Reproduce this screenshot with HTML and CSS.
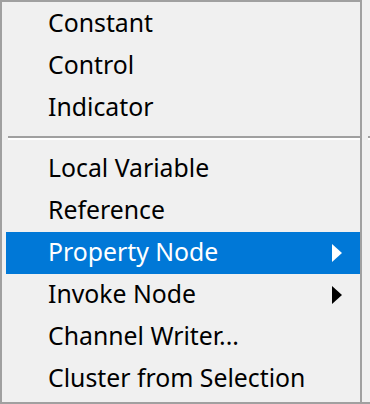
FILE: index.html
```html
<!DOCTYPE html>
<html lang="en">
<head>
    <meta charset="UTF-8">
    <meta name="viewport" content="width=device-width, initial-scale=1.0">
    <title>Context Menu</title>
    <link rel="stylesheet" href="styles.css">
</head>
<body>
    <div class="screen">
        <ul class="menu">
            <li class="item">Constant</li>
            <li class="item">Control</li>
            <li class="item">Indicator</li>
            <li class="separator"></li>
            <li class="item">Local Variable</li>
            <li class="item">Reference</li>
            <li class="item active">Property Node
                <svg class="arrow" width="10" height="18" viewBox="0 0 10 18"><polygon points="0,0 10,9 0,18"/></svg>
            </li>
            <li class="item">Invoke Node
                <svg class="arrow" width="10" height="18" viewBox="0 0 10 18"><polygon points="0,0 10,9 0,18"/></svg>
            </li>
            <li class="item">Channel Writer...</li>
            <li class="item">Cluster from Selection</li>
        </ul>
        <div class="behind">
            <div class="separator"></div>
        </div>
    </div>
</body>
</html>
```

FILE: styles.css
```css
body {
    margin: 0;
    padding: 0;
    background-color: #f0f0f0;
    font-family: "Noto Sans", "Open Sans", sans-serif;
}

.screen {
    display: flex;
    width: 370px;
    height: 404px;
    box-sizing: border-box;
    border-bottom: 2px solid #a0a0a0;
}

.menu {
    list-style: none;
    margin: 0;
    padding: 1px 0 0 4px;
    width: 362px;
    box-sizing: border-box;
    border: 2px solid #a0a0a0;
    border-bottom: none;
    background-color: #f0f0f0;
}

.item {
    display: flex;
    align-items: center;
    height: 42px;
    box-sizing: border-box;
    padding: 0 0 3px 42px;
    line-height: 39px;
    font-size: 24.8px;
    color: #000;
    white-space: nowrap;
}

.item.active {
    background-color: #0078d7;
    color: #fff;
}

.arrow {
    margin-left: auto;
    margin-right: 18px;
    margin-top: 3px;
    fill: #000;
}

.item.active .arrow {
    fill: #fff;
}

.separator {
    margin: 7px 0 8px 2px;
    height: 0;
    border-top: 2px solid #a0a0a0;
    border-bottom: 2px solid #fff;
}

.behind {
    flex: 1;
    padding-top: 129px;
}

.behind .separator {
    margin-left: 6px;
}
```
